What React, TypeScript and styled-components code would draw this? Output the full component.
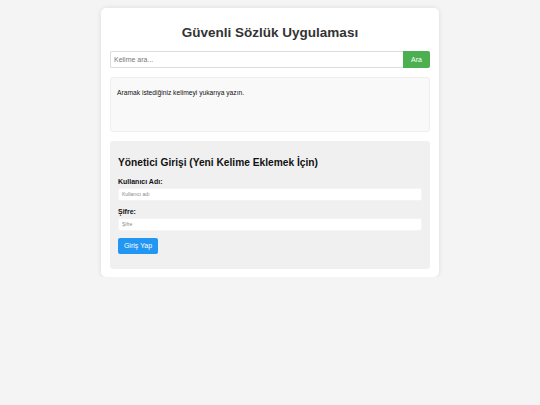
import React from "react";
import styled, { createGlobalStyle } from "styled-components";

const Global = createGlobalStyle`
  html, body { margin: 0; padding: 0; background: #f4f4f4; }
  body { font-family: "Liberation Sans", Arial, sans-serif; color: #333; }
  * { box-sizing: border-box; }
`;

const Page = styled.div`
  padding-top: 8px;
  display: flex;
  justify-content: center;
`;

const Card = styled.div`
  width: 338px;
  background: #fff;
  border-radius: 5px;
  box-shadow: 0 0 5px rgba(0, 0, 0, 0.1);
  padding: 9px 9px 8px;
  display: flex;
  flex-direction: column;
`;

const Title = styled.h1`
  margin: 8px 0 10px;
  font-size: 13.5px;
  font-weight: bold;
  text-align: center;
  color: #333;
  line-height: 16px;
`;

const SearchRow = styled.div`
  display: flex;
  height: 17px;
`;

const SearchInput = styled.input`
  flex: 1;
  height: 17px;
  border: 1px solid #ddd;
  border-right: none;
  border-radius: 2px 0 0 2px;
  padding: 0 3px;
  font-family: "Liberation Sans", Arial, sans-serif;
  font-size: 7px;
  outline: none;
  &::placeholder { color: #777; }
`;

const Button = styled.button<{ $color: string }>`
  border: none;
  padding: 0;
  white-space: nowrap;
  background: ${(p) => p.$color};
  color: #fff;
  font-family: "Liberation Sans", Arial, sans-serif;
  font-size: 7px;
  font-weight: normal;
  cursor: pointer;
`;

const SearchButton = styled(Button)`
  width: 27px;
  height: 17px;
  border-radius: 0 2px 2px 0;
`;

const ResultBox = styled.div`
  margin-top: 9px;
  height: 55px;
  background: #f9f9f9;
  border: 1px solid #eee;
  border-radius: 3px;
  padding: 10px 6px;
  font-size: 6.7px;
  line-height: 9px;
  color: #111;
`;

const AdminBox = styled.div`
  margin-top: 9px;
  background: #f0f0f0;
  border-radius: 3px;
  padding: 16px 8px 15px;
  display: flex;
  flex-direction: column;
`;

const AdminTitle = styled.h2`
  margin: 0 0 8px;
  font-size: 10.2px;
  line-height: 12px;
  font-weight: bold;
  color: #111;
`;

const Label = styled.label`
  font-size: 7px;
  font-weight: bold;
  line-height: 9px;
  margin-bottom: 1.5px;
  color: #111;
`;

const Field = styled.input`
  height: 13px;
  border: 1px solid #f4f4f4;
  border-radius: 2px;
  background: #fff;
  padding: 0 3px;
  font-family: "Liberation Sans", Arial, sans-serif;
  font-size: 5px;
  outline: none;
  margin-bottom: 6.5px;
  &::placeholder { color: #888; }
`;

const LoginButton = styled(Button)`
  align-self: flex-start;
  width: 40px;
  height: 16px;
  border-radius: 2px;
  margin-top: 0.5px;
`;

export default function App() {
  return (
    <>
      <Global />
      <Page>
        <Card>
          <Title>Güvenli Sözlük Uygulaması</Title>
          <SearchRow>
            <SearchInput placeholder="Kelime ara..." />
            <SearchButton $color="#4caf50">Ara</SearchButton>
          </SearchRow>
          <ResultBox>Aramak istediğiniz kelimeyi yukarıya yazın.</ResultBox>
          <AdminBox>
            <AdminTitle>Yönetici Girişi (Yeni Kelime Eklemek İçin)</AdminTitle>
            <Label>Kullanıcı Adı:</Label>
            <Field placeholder="Kullanıcı adı" />
            <Label>Şifre:</Label>
            <Field type="password" placeholder="Şifre" />
            <LoginButton $color="#2196f3">Giriş Yap</LoginButton>
          </AdminBox>
        </Card>
      </Page>
    </>
  );
}
